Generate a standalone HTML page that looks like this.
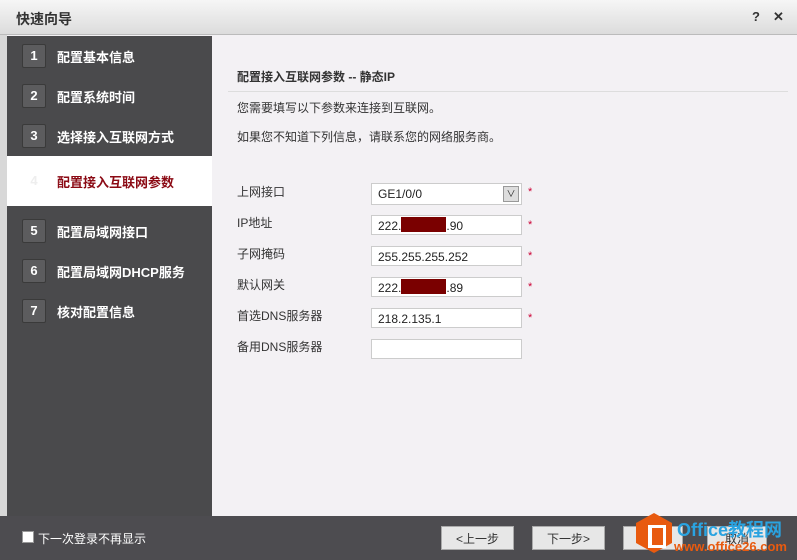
<!DOCTYPE html>
<html><head><meta charset="utf-8"><style>
body{margin:0;width:797px;height:560px;position:relative;overflow:hidden;background:#f3f1f4;font-family:"Liberation Sans","Noto Sans CJK SC",sans-serif;}
.title{position:absolute;left:0;top:0;width:797px;height:34px;background:linear-gradient(#f6f6f6,#dcdcdc);border-bottom:1px solid #bbb;}
.title span{position:absolute;left:16px;top:9px;font-size:14px;color:#333;font-weight:bold}
.title .ic{position:absolute;top:9px;font-size:13px;color:#333;font-weight:bold}
.left{position:absolute;left:0;top:35px;width:7px;height:481px;background:#d8d8d8}
.side{position:absolute;left:7px;top:36px;width:205px;height:480px;background:#4a4a4c}
.item{position:absolute;left:0;width:205px;height:40px;color:#fff;font-size:13px;font-weight:bold}
.item .n{position:absolute;left:15px;top:8px;width:22px;height:22px;background:#5c5c5e;border:1px solid #3a3a3a;border-radius:2px;text-align:center;line-height:22px;font-size:13px}
.item .t{position:absolute;left:50px;top:11px}
.act{background:#fff;height:50px;color:#8b0a14}
.right{position:absolute;left:212px;top:36px;width:585px;height:480px;background:#f3f1f4}
.h{position:absolute;left:25px;top:32px;font-size:12px;font-weight:bold;color:#333}
.hr{position:absolute;left:16px;top:55px;width:560px;border-top:1px solid #ddd}
.p{position:absolute;left:25px;font-size:12px;color:#333}
.lab{position:absolute;left:25px;font-size:12px;color:#333}
.inp{position:absolute;left:159px;width:151px;height:20px;background:#fff;border:1px solid #ccc;font-size:12px;line-height:20px;padding-left:6px;box-sizing:border-box;color:#222}
.star{position:absolute;left:316px;color:#c03;font-size:11px}
.red{display:inline-block;width:45px;height:15px;background:#7a0000;vertical-align:-2px}
.bot{position:absolute;left:0;top:516px;width:797px;height:44px;background:#4d4c50}
.btn{position:absolute;top:10px;width:73px;height:24px;background:#e7e7e7;border:1px solid #aaa;font-size:12px;color:#333;text-align:center;line-height:24px;box-sizing:border-box}
</style></head><body>
<div class="title"><span>快速向导</span><span class="ic" style="left:752px">?</span><span class="ic" style="left:773px">✕</span></div>
<div class="left"></div>
<div class="side">
<div class="item" style="top:0"><div class="n">1</div><div class="t">配置基本信息</div></div>
<div class="item" style="top:40px"><div class="n">2</div><div class="t">配置系统时间</div></div>
<div class="item" style="top:80px"><div class="n">3</div><div class="t">选择接入互联网方式</div></div>
<div class="item act" style="top:120px"><div class="n" style="background:#fff;border-color:#fff;color:#eee;top:13px">4</div><div class="t" style="top:16px">配置接入互联网参数</div></div>
<div class="item" style="top:175px"><div class="n">5</div><div class="t">配置局域网接口</div></div>
<div class="item" style="top:215px"><div class="n">6</div><div class="t">配置局域网DHCP服务</div></div>
<div class="item" style="top:255px"><div class="n">7</div><div class="t">核对配置信息</div></div>
</div>
<div class="right">
<div class="h">配置接入互联网参数 -- 静态IP</div>
<div class="hr"></div>
<div class="p" style="top:63px">您需要填写以下参数来连接到互联网。</div>
<div class="p" style="top:92px">如果您不知道下列信息，请联系您的网络服务商。</div>
<div class="lab" style="top:147px">上网接口</div>
<div class="inp" style="top:147px;height:22px">GE1/0/0<span style="position:absolute;right:2px;top:2px;width:14px;height:14px;border:1px solid #999;background:#ddd;font-size:9px;line-height:14px;text-align:center">∨</span></div><div class="star" style="top:150px">*</div>
<div class="lab" style="top:178px">IP地址</div>
<div class="inp" style="top:179px">222.<span class="red"></span>.90</div><div class="star" style="top:183px">*</div>
<div class="lab" style="top:209px">子网掩码</div>
<div class="inp" style="top:210px">255.255.255.252</div><div class="star" style="top:214px">*</div>
<div class="lab" style="top:240px">默认网关</div>
<div class="inp" style="top:241px">222.<span class="red"></span>.89</div><div class="star" style="top:245px">*</div>
<div class="lab" style="top:271px">首选DNS服务器</div>
<div class="inp" style="top:272px">218.2.135.1</div><div class="star" style="top:276px">*</div>
<div class="lab" style="top:302px">备用DNS服务器</div>
<div class="inp" style="top:303px"></div>
</div>
<div class="bot">
<div style="position:absolute;left:22px;top:15px;width:10px;height:10px;background:#fff;border:1px solid #999"></div>
<div style="position:absolute;left:38px;top:14px;color:#fff;font-size:12px">下一次登录不再显示</div>
<div class="btn" style="left:441px">&lt;上一步</div>
<div class="btn" style="left:532px">下一步&gt;</div>
<div class="btn" style="left:623px;width:60px"></div>
<div class="btn" style="left:707px;width:60px">取消</div>
<div style="position:absolute;left:636px;top:-3px;width:36px;height:40px;background:#e85a0f;clip-path:polygon(50% 0,100% 25%,100% 75%,50% 100%,0 75%,0 25%)"></div>
<div style="position:absolute;left:648px;top:9px;width:11px;height:17px;border:3px solid #fff;border-left-width:4px"></div>
<div style="position:absolute;left:677px;top:0px;color:#2aa3e0;font-size:18px;font-weight:bold">Office教程网</div>
<div style="position:absolute;left:674px;top:23px;color:#e85a0f;font-size:13px;font-weight:bold">www.office26.com</div>
</div>
</body></html>
